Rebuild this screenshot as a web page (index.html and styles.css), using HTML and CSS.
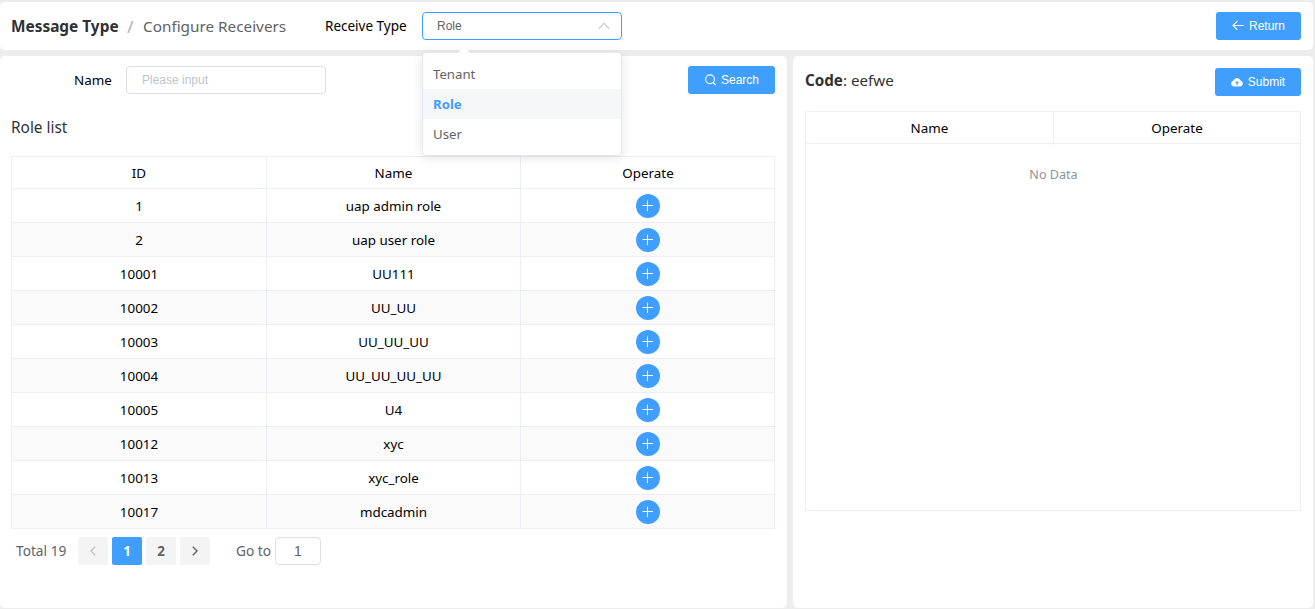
FILE: index.html
```html
<!DOCTYPE html>
<html lang="en">
<head>
<meta charset="utf-8">
<title>Configure Receivers</title>
<link rel="stylesheet" href="styles.css">
</head>
<body>
<svg class="sprite" aria-hidden="true">
  <symbol id="plus" viewBox="0 0 24 24"><path d="M6.5 11.5h10.5M11.5 6.5v10.5" fill="none" stroke="currentColor" stroke-width="1"/></symbol>
</svg>
<header class="card topbar">
  <div class="crumbs"><b class="crumb-root">Message Type</b><span class="slash">/</span><span class="crumb-leaf">Configure Receivers</span></div>
  <label class="type-label">Receive Type</label>
  <div class="select">
    <span>Role</span>
    <svg width="14" height="14" viewBox="0 0 14 14"><path d="M1.8 9.8 7 4.2l5.2 5.6" fill="none" stroke="#c0c4cc" stroke-width="1.1"/></svg>
    <div class="dropdown">
      <ul class="options">
        <li>Tenant</li>
        <li class="selected">Role</li>
        <li>User</li>
      </ul>
    </div>
  </div>
  <button class="btn btn-return"><svg width="12" height="12" viewBox="0 0 12 12"><path d="M11.5 5.5H1M5.4 1.1 1 5.5l4.4 4.4" fill="none" stroke="currentColor" stroke-width="1.1"/></svg><span>Return</span></button>
</header>
<main class="panels">
  <section class="card left">
    <div class="search-row">
      <label class="name-label">Name</label>
      <input class="input" type="text" placeholder="Please input">
      <button class="btn btn-search"><svg width="12" height="12" viewBox="0 0 12 12"><circle cx="6" cy="5.3" r="4.4" fill="none" stroke="currentColor" stroke-width="1.1"/><path d="m9.1 8.5 2.5 2.5" stroke="currentColor" stroke-width="1.1"/></svg><span>Search</span></button>
    </div>
    <h2 class="list-title">Role list</h2>
    <table class="table">
      <colgroup><col class="col-id"><col><col></colgroup>
      <thead><tr><th>ID</th><th>Name</th><th>Operate</th></tr></thead>
      <tbody>
        <tr><td>1</td><td>uap admin role</td><td><button class="add"><svg width="24" height="24"><use href="#plus"/></svg></button></td></tr>
        <tr><td>2</td><td>uap user role</td><td><button class="add"><svg width="24" height="24"><use href="#plus"/></svg></button></td></tr>
        <tr><td>10001</td><td>UU111</td><td><button class="add"><svg width="24" height="24"><use href="#plus"/></svg></button></td></tr>
        <tr><td>10002</td><td>UU_UU</td><td><button class="add"><svg width="24" height="24"><use href="#plus"/></svg></button></td></tr>
        <tr><td>10003</td><td>UU_UU_UU</td><td><button class="add"><svg width="24" height="24"><use href="#plus"/></svg></button></td></tr>
        <tr><td>10004</td><td>UU_UU_UU_UU</td><td><button class="add"><svg width="24" height="24"><use href="#plus"/></svg></button></td></tr>
        <tr><td>10005</td><td>U4</td><td><button class="add"><svg width="24" height="24"><use href="#plus"/></svg></button></td></tr>
        <tr><td>10012</td><td>xyc</td><td><button class="add"><svg width="24" height="24"><use href="#plus"/></svg></button></td></tr>
        <tr><td>10013</td><td>xyc_role</td><td><button class="add"><svg width="24" height="24"><use href="#plus"/></svg></button></td></tr>
        <tr><td>10017</td><td>mdcadmin</td><td><button class="add"><svg width="24" height="24"><use href="#plus"/></svg></button></td></tr>
      </tbody>
    </table>
    <nav class="pager">
      <span class="total">Total 19</span>
      <button class="page disabled"><svg width="12" height="12" viewBox="0 0 12 12"><path d="M8.2 1.8 4 6l4.2 4.2" fill="none" stroke="currentColor" stroke-width="1.4"/></svg></button>
      <button class="page current">1</button>
      <button class="page">2</button>
      <button class="page"><svg width="12" height="12" viewBox="0 0 12 12"><path d="M3.8 1.8 8 6l-4.2 4.2" fill="none" stroke="currentColor" stroke-width="1.4"/></svg></button>
      <span class="goto">Go to</span>
      <input class="goto-input" type="text" value="1">
    </nav>
  </section>
  <section class="card right">
    <div class="code-row">
      <div class="code"><b>Code</b>: eefwe</div>
      <button class="btn btn-submit"><svg width="12" height="12" viewBox="0 0 12 12"><path fill-rule="evenodd" fill="currentColor" d="M3.2 10.5A3.1 3.1 0 0 1 2.5 4.4 3.7 3.7 0 0 1 9.5 4.4a3.1 3.1 0 0 1-.7 6.1ZM6 4.9 3.8 7.2h1.7v2h1v-2h1.7Z"/></svg><span>Submit</span></button>
    </div>
    <div class="receivers">
      <div class="receivers-head"><span>Name</span><span>Operate</span></div>
      <div class="empty">No Data</div>
    </div>
  </section>
</main>
</body>
</html>
```
FILE: styles.css
```css
* { box-sizing: border-box; }
body {
  margin: 0;
  height: 609px;
  padding: 2px 2px 1px 0;
  display: flex;
  flex-direction: column;
  gap: 6px;
  overflow: hidden;
  background: #ededed;
  color: #000;
  font: 13.4px/20px "Noto Sans", "Open Sans", sans-serif;
}
button, input { font-family: "Liberation Sans", Arial, sans-serif; margin: 0; }
.sprite { position: absolute; width: 0; height: 0; }
.card { background: #fff; border-radius: 5px; }
.topbar { display: flex; align-items: flex-start; height: 48px; padding: 10px 12px 0 11px; flex: none; }
.crumbs { display: flex; width: 314px; line-height: 30px; white-space: nowrap; }
.crumb-root { width: 108px; color: #303133; font-size: 15.4px; }
.slash { width: 24px; padding-left: 8px; color: #c0c4cc; font-size: 16px; font-weight: 700; }
.crumb-leaf { color: #606266; font-size: 15.3px; line-height: 28px; }
.type-label { width: 97px; line-height: 28px; font-size: 13.5px; }
.select {
  position: relative;
  display: flex;
  align-items: center;
  justify-content: space-between;
  width: 200px;
  height: 28px;
  padding: 0 10px 0 14px;
  border: 1px solid #409eff;
  border-radius: 4px;
  color: #606266;
  font: 12px "Liberation Sans", Arial, sans-serif;
}
.dropdown {
  position: absolute;
  z-index: 5;
  top: 39px;
  left: -1px;
  width: 200px;
  height: 104px;
  border: 1px solid #e4e7ed;
  border-radius: 4px;
  background: #fff;
  box-shadow: 0 2px 12px rgba(0, 0, 0, .1);
  font: 14px/30px "Noto Sans", "Open Sans", sans-serif;
}
.dropdown::before {
  content: "";
  position: absolute;
  top: -6px;
  left: 35px;
  border: 6px solid transparent;
  border-top: 0;
  border-bottom-color: #fff;
}
.options { margin: 0; padding: 6px 0; list-style: none; font-size: 13.2px; }
.options li { height: 30px; padding-left: 10px; }
.options .selected { background: #f5f7fa; color: #409eff; font-weight: 700; }
.btn {
  display: inline-flex;
  align-items: center;
  justify-content: center;
  gap: 5px;
  height: 28px;
  padding: 0;
  border: 0;
  border-radius: 3px;
  background: #409eff;
  color: #fff;
  font-size: 12px;
}
.btn-return { width: 85px; margin-left: auto; }
.panels { display: grid; grid-template-columns: 787px 520px; gap: 6px; flex: 1; }
.left { padding: 10px 12px 0 11px; }
.search-row { display: flex; height: 28px; }
.name-label { width: 115px; padding-left: 63px; line-height: 29px; }
.input {
  width: 200px;
  height: 28px;
  padding: 0 15px;
  border: 1px solid #dcdfe6;
  border-radius: 4px;
  font-size: 12px;
}
.input::placeholder { color: #c0c4cc; }
.btn-search { width: 87px; margin-left: auto; }
.list-title { margin: 22px 0 17px; color: #303133; font-size: 15.4px; font-weight: 400; line-height: 23px; }
.table { width: 764px; border-collapse: collapse; table-layout: fixed; text-align: center; }
.col-id { width: 255px; }
.table th, .table td { padding: 0; border: 1px solid #ebeef5; font-weight: 400; }
.table th { height: 32px; }
.table td { height: 34px; }
.table th:last-child, .table td:last-child { padding-left: 1px; }
.table tbody tr:nth-child(even) { background: #fafafa; }
.add {
  display: block;
  width: 24px;
  height: 24px;
  margin: 0 auto;
  padding: 0;
  border: 0;
  border-radius: 50%;
  background: #409eff;
  color: #fff;
}
.add svg { display: block; }
.pager { display: flex; align-items: center; gap: 4px; margin-top: 8px; padding-left: 5px; color: #606266; font-size: 13.7px; }
.total { width: 58px; white-space: nowrap; }
.page {
  display: flex;
  align-items: center;
  justify-content: center;
  width: 30px;
  height: 28px;
  padding: 0;
  border: 0;
  border-radius: 2px;
  background: #f4f4f5;
  color: #606266;
  font: 700 13.4px "Noto Sans", "Open Sans", sans-serif;
}
.page.current { background: #409eff; color: #fff; }
.page.disabled { color: #c0c4cc; }
.goto { width: 35px; margin-left: 22px; white-space: nowrap; }
.goto-input {
  width: 46px;
  height: 28px;
  padding: 0;
  border: 1px solid #dcdfe6;
  border-radius: 4px;
  color: #606266;
  font-size: 14px;
  text-align: center;
}
.right { padding: 12px 12px 0; }
.code-row { display: flex; justify-content: space-between; height: 28px; }
.code { color: #303133; font-size: 15.2px; line-height: 25px; }
.btn-submit { width: 86px; }
.receivers { height: 400px; margin-top: 15px; border: 1px solid #ebeef5; }
.receivers-head { display: grid; grid-template-columns: 248px 1fr; height: 32px; border-bottom: 1px solid #ebeef5; text-align: center; line-height: 33px; }
.receivers-head span:first-child { border-right: 1px solid #ebeef5; }
.empty { padding-left: 1px; color: #909399; font-size: 12.6px; line-height: 62px; text-align: center; }
```
